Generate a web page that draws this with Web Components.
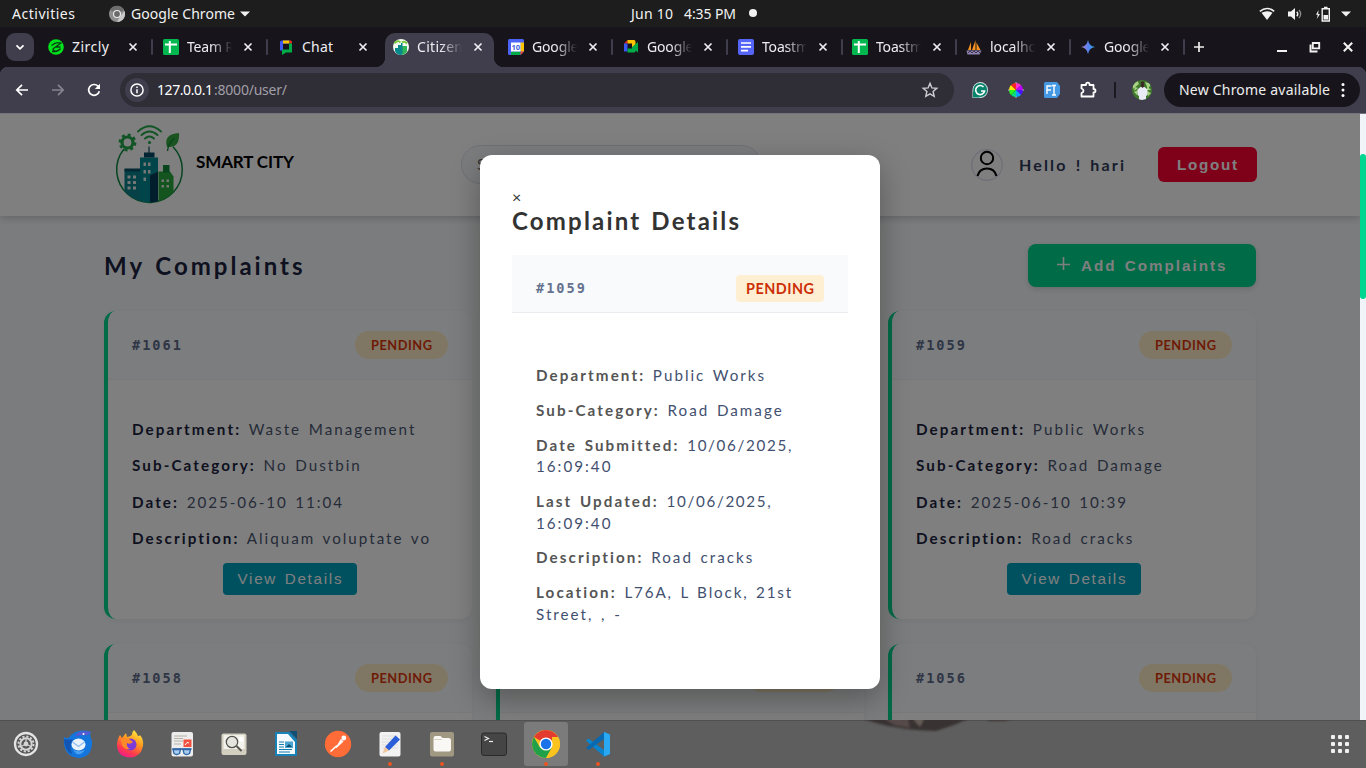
<!DOCTYPE html>
<html lang="en">
<head>
<meta charset="utf-8">
<title>Citizen Dashboard</title>
<style>
html,body{margin:0;height:100%;overflow:hidden;background:#5e5e5e}
body{font-family:"Noto Sans",sans-serif;color:#f2f2f2}
</style>
</head>
<body>
<desktop-shell></desktop-shell>
<script>
const make=(name,css,html,after)=>{
  const t=document.createElement('template');
  t.innerHTML=`<style>*{box-sizing:border-box}${css}</style>${typeof html==='string'?html:''}`;
  customElements.define(name,class extends HTMLElement{
    connectedCallback(){
      if(this.shadowRoot)return;
      const r=this.attachShadow({mode:'open'});
      r.append(t.content.cloneNode(true));
      if(typeof html==='function'){const x=document.createElement('template');x.innerHTML=html(this);r.append(x.content.cloneNode(true));}
      if(after)after(this,r);
    }
  });
};

/* Single line label whose tracking is tuned to a given width */
make('fit-text',`:host{display:inline-block;white-space:nowrap;flex:none}span{display:inline-block}`,
 e=>`<span>${e.getAttribute('t')}</span>`,
 (e,r)=>{
  const s=r.querySelector('span'),w=+e.getAttribute('w'),n=e.getAttribute('t').length-1;
  s.style.letterSpacing='0px';
  const nat=s.getBoundingClientRect().width;
  if(nat&&w)s.style.letterSpacing=((w-nat)/n).toFixed(3)+'px';
  if(w)e.style.width=w+'px';
 });

/* ---------- icons ---------- */
const sheets='<rect x="0" y="0" width="16" height="16" rx="1.5" fill="#00b84f"/><path d="M2 5.4h12M6.800 2v12" stroke="#fff" stroke-width="2"/>';
const meet='<path d="M1 4.500 4.500 1v3.500z" fill="#ea2a20"/><path d="M4.500 1H11q1.500 0 1.500 1.500V8H9V4.500H4.500z" fill="#ffc400"/><path d="M1 4.500h3.500v8H1z" fill="#3b55f0"/><path d="M4.500 9.500H9V8l6-5v10.500l-2.500-2V12q0 1.500-1.500 1.500H4.500z" fill="#00ac47"/>';
const smart=`<defs><clipPath id="k"><circle cx="34.500" cy="47.300" r="32.800"/></clipPath></defs>
<path d="M9 25A32.800 32.800 0 1 0 58 22.800" fill="none" stroke="#0f8a43" stroke-width="1.500"/>
<g transform="translate(0,-1.500)"><g clip-path="url(#k)"><path d="M9.500 47H25V82H9.500z" fill="#0a838d"/><path d="M9.500 46H25v3H9.500z" fill="#075069"/>
<path d="M25 35H43V82H25z" fill="#008a92"/><path d="M29 30h10.500v5H29z" fill="#064a66"/><path d="M34 24v7" stroke="#064a66" stroke-width="1.200"/>
<path d="M35 53 43 49V82H35z" fill="#053c58"/>
<path d="M43.500 49H55l3.500 5V82h-15z" fill="#27a83f"/><path d="M48 42.500h6.500V50H48z" fill="#108a38"/></g>
<g fill="#e6f0ee"><path d="M12.500 53h3v3h-3zm5.500 0h3v3h-3zM12.500 58.500h3v3h-3zm5.500 0h3v3h-3zM12.500 64h3v3h-3zm5.500 0h3v3h-3zM28.500 40h2.500v3.500h-2.500zm4.500 0h2.500v3.500H33zM28.500 47.500h2.500V51h-2.500zm4.500 0h2.500V51H33zM28.500 55h2.500v3.500h-2.500zM46.500 57h2.500v2.500h-2.500zm5 0H54v2.500h-2.500zM46.500 62.500h2.500V65h-2.500zm5 0H54V65h-2.500z"/></g></g>
<g transform="translate(0,-2)"><circle cx="12.500" cy="20.500" r="5.500" fill="none" stroke="#23a94a" stroke-width="3.200"/><circle cx="12.500" cy="20.500" r="7.700" fill="none" stroke="#23a94a" stroke-width="2.500" stroke-dasharray="3.020 3.020"/>
<g fill="none" stroke="#23a94a" stroke-width="1.900" stroke-linecap="round"><path d="M23 9.500Q34.500-1 46 9.500M26.500 13q8-7 16 0M30 16.500q4.500-4 9 0"/></g><circle cx="34.500" cy="20.500" r="1.600" fill="#23a94a"/>
<path d="M52 25Q48 12 64 11Q65 25 54 25z" fill="#35a943"/><path d="M52.500 29Q53 22 59.500 16" fill="none" stroke="#108a38" stroke-width="1.400"/></g>`;
const I={
 zircly:['0 0 16 16','<circle cx="8" cy="8" r="7.800" fill="#00e21b"/><path d="M3.500 6.500Q8 2.500 13 4L5.500 9.500Q4 11.500 7 11.800M12.500 9.500Q10 13 4 12.500M7 8h5.500" fill="none" stroke="#093b12" stroke-width="1.300"/>'],
 sheets:['0 0 16 16',sheets],
 chat:['0 0 16 16','<path d="M2 3Q2 1.500 3.500 1.500H11v3H5v7H2z" fill="#3e5bf6"/><path d="M5 1.500h6.500v3H5z" fill="#ffc600"/><path d="M11.500 1.500h1Q14 1.500 14 4.500h-2.500z" fill="#ef3124"/><path d="M11 4.500h3v9H8L4 16v-5.500h7z" fill="#00ac47"/>'],
 city:['0 0 16 16','<circle cx="8" cy="8" r="8" fill="#f4faef"/><path d="M2 9h3V6h3V4h1.500v3H13v6Q11 16 7 16 3 15 2 12z" fill="#07898b"/><path d="M9.500 7H14v6q-2 2-4.500 3z" fill="#31b65a"/><path d="M1.500 4.500q3-4 6-1M9 3.500q2-2 5 1" stroke="#79c73b" stroke-width="1.800" fill="none"/>'],
 cal:['0 0 16 16','<path d="M0 1.500Q0 0 1.500 0H14.500Q16 0 16 1.500V12.500L12.500 16H1.500Q0 16 0 14.500z" fill="#4a62f5"/><path d="M12.500 3.500H16V12.500H12.500z" fill="#ffc400"/><path d="M3 12.500h9.500V16H3z" fill="#00ac47"/><path d="M12.500 12.500H16L12.500 16z" fill="#ea4335"/><path d="M3 3.500h9.500v9H3z" fill="#fff"/><text x="7.800" y="10.900" font-family="Noto Sans,sans-serif" font-size="7.500" font-weight="700" text-anchor="middle" fill="#3f62e0">10</text>'],
 meet:['0 0 16 16',meet],
 docs:['0 0 16 16','<rect width="16" height="16" rx="2" fill="#5565f7"/><path d="M3 4h10M3 7.800h10M3 11.700h7" stroke="#fff" stroke-width="1.700"/>'],
 pma:['0 0 16 16','<path d="M2 11 5 3v8zM6 11l3.500-10v10zM10.500 11V3.500L14.500 11z" fill="#f6921e"/><path d="M.5 11.500h15l-2 4h-12z" fill="#8d83ad"/><path d="M2 14l2-2 2 2 2-2 2 2 2-2 2 2" stroke="#393156" fill="none"/>'],
 gem:['0 0 16 16','<defs><linearGradient id="g"><stop stop-color="#b07bd0"/><stop offset=".6" stop-color="#4b86f5"/><stop offset="1" stop-color="#35b0e8"/></linearGradient></defs><path d="M8 1Q9 7 15 8 9 9 8 15 7 9 1 8 7 7 8 1z" fill="url(#g)"/>'],
 x:['0 0 10 10','<path d="M1.500 1.500l7 7M8.500 1.500l-7 7" stroke="currentColor" stroke-width="1.700"/>'],
 down:['0 0 10 10','<path d="M1.500 3.300 5 6.800 8.500 3.300" fill="none" stroke="#fff" stroke-width="1.800"/>'],
 tri:['0 0 10 6','<path d="M0 .5h10L5 5.500z" fill="#f2f2f2"/>'],
 plus:['0 0 12 12','<path d="M6 1v10M1 6h10" stroke="currentColor" stroke-width="1.700"/>'],
 add:['0 0 16 16','<path d="M7.500 1v13M1 8.500h13" stroke="currentColor" stroke-width="1.600"/>'],
 back:['0 0 14 14','<path d="M13 7H2M7 1.800 1.800 7 7 12.200" fill="none" stroke="#fff" stroke-width="1.700"/>'],
 fwd:['0 0 14 14','<path d="M1 7h11M7 1.800 12.200 7 7 12.200" fill="none" stroke="#85838f" stroke-width="1.700"/>'],
 reload:['0 0 14 14','<path d="M12.300 8.200A5.400 5.400 0 1 1 11 3.200L12.400 4.700" fill="none" stroke="#fff" stroke-width="1.700"/><path d="M13 .8V6H7.800z" fill="#fff"/>'],
 info:['0 0 14 14','<circle cx="7" cy="7" r="6.100" fill="none" stroke="#fff" stroke-width="1.500"/><path d="M7 6.300v4M7 3.500v1.600" stroke="#fff" stroke-width="1.500"/>'],
 star:['0 0 16 16','<path d="M8 1.300 9.900 5.900l4.900.4-3.700 3.200 1.100 4.800L8 11.800l-4.200 2.500 1.100-4.800L1.200 6.300l4.900-.4z" fill="none" stroke="#cfcdd3" stroke-width="1.400"/>'],
 gram:['0 0 16 16','<path d="M8 0a8 8 0 1 1 0 16H.5V8A8 8 0 0 1 8 0z" fill="#d8e9e4"/><circle cx="8.200" cy="8" r="7" fill="#07826c"/><path d="M1 9v6.500h7z" fill="#07826c"/><path d="M11.500 5A4.500 4.500 0 1 0 12.600 9H9" fill="none" stroke="#fff" stroke-width="1.600"/>'],
 wheel:['0 0 16 16','<path d="M8 8V1A7 7 0 0 1 13 3z" fill="#ff31d0"/><path d="M8 8l5-5a7 7 0 0 1 2 5z" fill="#c000ff"/><path d="M8 8h7a7 7 0 0 1-2 5z" fill="#4c12ff"/><path d="M8 8l5 5a7 7 0 0 1-5 2z" fill="#0aa0ff"/><path d="M8 8v7a7 7 0 0 1-5-2z" fill="#00dd7f"/><path d="M8 8l-5 5a7 7 0 0 1-2-5z" fill="#29f31f"/><path d="M8 8H1a7 7 0 0 1 2-5z" fill="#ffe600"/><path d="M8 8 3 3a7 7 0 0 1 5-2z" fill="#ff2424"/><path d="M8 0v1.500M8 14.500V16M0 8h1.500M14.500 8H16" stroke="#bbb"/>'],
 fi:['0 0 16 16','<path d="M1.500 0H13l3 4v8l-3 4H1.500Q0 16 0 14.500v-13Q0 0 1.500 0z" fill="#4598e4"/><path d="M3 12V4h4.500M3 8h4M8 3.500h4M8 13h4M10 3.500V13" fill="none" stroke="#fff" stroke-width="1.400"/>'],
 ext:['0 0 18 18','<path d="M2.500 4H7q0-2.300 1.800-2.300T10.600 4H14.500V8q2 0 2 1.700t-2 1.800V15.500H2.500V12q2-.5 2-2.200T2.500 7.500z" fill="none" stroke="#fff" stroke-width="1.800" stroke-linejoin="round"/>'],
 avatar:['0 0 20 20','<defs><clipPath id="c"><circle cx="10" cy="10" r="10"/></clipPath></defs><g clip-path="url(#c)"><path d="M0 0h20v20H0z" fill="#3f7a2c"/><path d="M0 3l5-3 2 4-6 5zM13 2l6 2-3 5zM2 12l4-2-1 5zM15 11l4 2-3 3zM3 7l3 1-4 3zM15 6l4 4-4 0z" fill="#a9d284"/><path d="M7 20V16L5.500 15V9.500L8.500 7h4l3 2.500V15L14 16v4z" fill="#e9ebf4"/><path d="M8.800 2.500Q10.500 0 12.200 2.500V6.500L10.500 8 8.800 6.500z" fill="#3b2a26"/></g>'],
 dots:['0 0 4 16','<g fill="#fff"><circle cx="2" cy="2.500" r="1.500"/><circle cx="2" cy="8" r="1.500"/><circle cx="2" cy="13.500" r="1.500"/></g>'],
 chromeg:['0 0 16 16','<circle cx="8" cy="8" r="8" fill="#8f8f8f"/><path d="M8 8 1 4A8 8 0 0 1 15 4z" fill="#6d6d6d"/><path d="M15.500 5A8 8 0 0 1 8 16l3.500-6z" fill="#c9c9c9"/><circle cx="8" cy="8" r="4" fill="#eee"/><circle cx="8" cy="8" r="2.900" fill="#6a6a6a"/>'],
 wifi:['0 0 16 14','<path d="M2.500 5.800Q8 2.500 13.500 5.800L8 13z" fill="#f2f2f2"/><path d="M.8 4.300Q8-1.500 15.200 4.300" fill="none" stroke="#f2f2f2" stroke-width="1.500"/>'],
 vol:['0 0 16 14','<path d="M1 4.500h3L8 1v12L4 9.500H1z" fill="#f2f2f2"/><path d="M9.800 4.700q2 2.300 0 4.600" stroke="#f2f2f2" stroke-width="1.400" fill="none"/><path d="M12 3q3.300 4 0 8" stroke="#8c8c8c" stroke-width="1.300" fill="none"/>'],
 batt:['0 0 16 16','<path d="M3.500 4 1 8.700h1.800L1.800 13 5 8H3.200z" fill="#f2f2f2"/><path d="M7.200 2.700h7.100V15H7.200zM9 1.500h3.500" fill="none" stroke="#f2f2f2" stroke-width="1.400"/><path d="M8.500 9h4.600v4.600H8.500z" fill="#f2f2f2"/>'],
 min:['0 0 12 12','<path d="M1 10h10" stroke="#f2f2f2" stroke-width="2"/>'],
 rest:['0 0 12 12','<path d="M3.800 2h6.400v5.400H3.800zM1.500 3.500v7h7" fill="none" stroke="#f2f2f2" stroke-width="1.900"/>'],
 logo:['0 0 70 82',smart],
 person:['0 0 34 34','<circle cx="17" cy="17" r="15.300" fill="none" stroke="#e0def0" stroke-width="1.300"/><circle cx="17" cy="10" r="6.200" fill="none" stroke="#000" stroke-width="2"/><path d="M7.500 28Q9.500 20.500 17 20.500T26.500 28" fill="none" stroke="#000" stroke-width="2.100"/>'],
 settings:['0 0 28 28','<circle cx="14" cy="14" r="11" fill="#555" stroke="#e4e4e4" stroke-width="2.300"/><circle cx="14" cy="14" r="5.700" fill="none" stroke="#d4d4d4" stroke-width="2"/><circle cx="14" cy="14" r="7.500" fill="none" stroke="#d4d4d4" stroke-width="2" stroke-dasharray="2.200 1.730"/><circle cx="14" cy="14" r="2.400" fill="#d4d4d4"/><path d="M14 14V8.500M14 14l5 2.500M14 14l-5 2.500" stroke="#d4d4d4" stroke-width="1.200"/>'],
 tbird:['0 0 28 28','<path d="M0 7Q2 8.500 4.500 8 8 3 13 1.500 20-.5 27 2 25.500 4 26.500 7 28.500 10 28 15 26.500 27.500 14.500 28 3 27 .5 17-.5 11 0 7z" fill="#1476dd"/><path d="M12 4.500Q16-.5 27 2q-2 3-5 3.500Q17 4 12 6.500z" fill="#5659cf"/><circle cx="19.500" cy="4" r="1" fill="#fff"/><path d="M0 9Q0 20 8 24.500 5 15 9 9 4 10 0 9z" fill="#1156b4"/><ellipse cx="14.500" cy="14.500" rx="7" ry="6" fill="#e9f3fe"/><path d="M8.500 12 14.500 16.500 20.500 12" fill="none" stroke="#8dbbee" stroke-width="1.200"/><path d="M8.500 19q5 4 12 1-2 5-8 4z" fill="#4ba0f2"/>'],
 fox:['0 0 28 28','<defs><linearGradient id="f" x1=".8" y1="0" x2=".3" y2="1"><stop stop-color="#fff044"/><stop offset=".4" stop-color="#ff9a1f"/><stop offset=".75" stop-color="#ff3d4a"/><stop offset="1" stop-color="#f0198b"/></linearGradient></defs><path d="M18 0q3 3 4 6 2 0 2-1 4 5 3 11-2 11-13 11.500Q2 27 1 16 1 9 4 5l2 3 4-5 1 4q5-1 5-3 0-2 2-4z" fill="url(#f)"/><circle cx="14.500" cy="14.500" r="6" fill="#7c3bd6"/><path d="M5 9q4-2 8 0l4 3q-3 3-6 1-1 4 3 6-6 1-8-4z" fill="#ff8a2a"/>'],
 doc:['0 0 28 28','<rect x="3.500" y="2" width="21.500" height="24.500" rx="2" fill="#ededed"/><path d="M6 6h13M6 8.500h9M6 11h9M6 14h7" stroke="#b5b0a5"/><path d="M15.500 9.500h8v7.500h-8z" fill="#f0503f"/><path d="M17 15q2-4 4-2" fill="none" stroke="#fff"/><path d="M4.500 19h19" stroke="#2d5c9c" stroke-width="1.600"/><path d="M5 19.500h7.500l-1 4q-3 2-5.500 0zM15 19.500h7.500l-1 4q-3 2-5.500 0z" fill="#a9cdf0" stroke="#2d66a8" stroke-width="1.300"/>'],
 scan:['0 0 28 28','<rect x="1.500" y="3.500" width="25" height="21.500" rx="2" fill="#d3cfc0"/><rect x="3.500" y="5" width="21" height="14" fill="#f4f2ec"/><circle cx="12" cy="12" r="5.700" fill="#e5e5e0" stroke="#55554f" stroke-width="1.300"/><path d="M16.500 16l5 5" stroke="#55554f" stroke-width="2"/><circle cx="21" cy="9.500" r="2.500" fill="#fff"/>'],
 writer:['0 0 28 28','<path d="M3 2h15l7 8v16H3z" fill="#1682b8"/><path d="M5 4h11l7 8v12H5z" fill="#f4fafd"/><path d="M17 1h8v8z" fill="#124f74"/><path d="M7 12h5M7 14.500h5M7 17h5M7 19.500h13M7 22h11" stroke="#157cae" stroke-width="1.100"/><path d="M13 11.500h8V18h-8z" fill="#4aa4cf"/><path d="M14 17l3-3 3 3z" fill="#0c4d70"/>'],
 postman:['0 0 28 28','<circle cx="14" cy="14" r="13.200" fill="#ff6c37"/><circle cx="19.800" cy="8" r="2.400" fill="#fff"/><path d="M17 9.500 19 11.500 12 18z" fill="#fff" stroke="#fff"/><path d="M13 15.500 6.500 21.500" stroke="#fff" stroke-width="1.600"/>'],
 edit:['0 0 28 28','<rect x="3.500" y="2" width="21" height="24.500" rx="2" fill="#f2f2f2"/><path d="M6 6h16M6 9h16M6 12h16M6 15h16M6 18h16" stroke="#ddd"/><path d="M19.500 5.500 24 9.500 13 20.500 9 17z" fill="#2b5fd9"/><path d="M9 17 13 20.500 6.500 23.500z" fill="#f0c59a"/>'],
 files:['0 0 28 28','<rect x="2" y="2" width="24" height="24.500" rx="2" fill="#a19882"/><path d="M5.500 9Q5.500 6 7.500 6h5l2 2h6Q23 8 23 10v9.500q0 2-2 2H7.500q-2 0-2-2z" fill="#faf8f4"/><path d="M6 9.500h8" stroke="#d9d4c6"/>'],
 term:['0 0 28 28','<rect x="1.500" y="3" width="25" height="22.500" rx="2.500" fill="#454545" stroke="#2a2a2a"/><path d="M4.500 6.500l4 2-4 2" fill="none" stroke="#eee" stroke-width="1.200"/><path d="M9 11.500h4" stroke="#eee" stroke-width="1.200"/>'],
 chrome:['0 0 28 28','<circle cx="14" cy="14" r="14" fill="#fcc31e"/><path d="M14 14 1.900 7A14 14 0 0 1 26.100 7z" fill="#e33b2e"/><path d="M1.900 7A14 14 0 0 0 14 28l6-10.500L8 17.500z" fill="#21a04a"/><path d="M26.100 7A14 14 0 0 1 14 28l6-10.500V7z" fill="#fcc31e"/><circle cx="14" cy="14" r="6.600" fill="#fff"/><circle cx="14" cy="14" r="5.200" fill="#1a73e8"/>'],
 code:['0 0 28 28','<path d="M20 2l6 2.500V24L20 26.500 3.500 12 2 10.500 4.500 8.500 20 20z" fill="#0a84ce"/><path d="M20 2v7L4.500 20 2 18z" fill="#0969b0"/><path d="M20 2l6 2.500V24L20 26.500z" fill="#29a8f3"/>'],
 apps:['0 0 18 18','<g fill="#f0f0f0">'+[0,7,14].map(y=>[0,7,14].map(x=>`<rect x="${x}" y="${y}" width="4" height="4" rx="1"/>`).join('')).join('')+'</g>']
};
make('ui-icon',`:host{display:block;flex:none;line-height:0}svg{display:block;overflow:visible}`,
 e=>{const [vb,c]=I[e.getAttribute('n')],w=e.getAttribute('w')||16,h=e.getAttribute('h')||w;return `<svg viewBox="${vb}" width="${w}" height="${h}" aria-hidden="true">${c}</svg>`});

/* ---------- desktop ---------- */
make('top-panel',`:host{display:grid;grid-template-columns:631px 1fr 107px;height:27px;background:#1d1d1d;font-size:14px;line-height:27px;align-items:center}
div{display:flex;align-items:center;height:27px}
.a{padding-left:12px}.a ui-icon{margin-left:34px}.a fit-text:nth-of-type(2){margin:0 5px 0 6px}.a .tri{margin-left:0}
.dot{width:8px;height:8px;border-radius:50%;background:#f2f2f2;margin-left:13px}
.c{margin-top:-1px}`,
`<div class="a"><fit-text t="Activities" w="63"></fit-text><ui-icon n="chromeg" w="16"></ui-icon><fit-text t="Google Chrome" w="104"></fit-text><ui-icon class="tri" n="tri" w="10" h="6"></ui-icon></div>
<div class="c"><fit-text t="Jun 10" w="42"></fit-text><fit-text t="4:35 PM" w="52" style="margin-left:11px"></fit-text><span class="dot"></span></div>
<div class="r"><ui-icon n="wifi" w="16" h="14"></ui-icon><ui-icon n="vol" w="16" h="14" style="margin-left:12px"></ui-icon><ui-icon n="batt" w="16" style="margin-left:12px"></ui-icon><ui-icon n="tri" w="10" h="6" style="margin-left:10px"></ui-icon></div>`);

make('browser-tab',`:host{display:block;width:115px;height:40px;flex:none;position:relative;color:#eeedf2}
:host([s]){width:114px}
:host([on])::before{content:"";position:absolute;left:3px;top:6px;width:109px;height:34px;background:#403e4c;border-radius:10px 10px 0 0}
:host([on])::after{content:"";position:absolute;left:-7px;right:-7px;bottom:0;height:10px;background:radial-gradient(circle at 0 0,#0000 10px,#403e4c 10.500px) 0 0/10px 10px no-repeat,radial-gradient(circle at 100% 0,#0000 10px,#403e4c 10.500px) 100% 0/10px 10px no-repeat}
.row{position:relative;display:flex;align-items:center;height:40px;padding-left:11px;z-index:1}
.t{margin-left:8px;width:47px;flex:none;font-size:14px;line-height:22px;height:22px;white-space:nowrap}
:host([long]) .t{-webkit-mask:linear-gradient(90deg,#000 50%,transparent 96%);mask:linear-gradient(90deg,#000 50%,transparent 96%)}
.x{margin-left:9px}.sep{width:2px;height:16px;flex:none;background:#403e4c;margin-left:13px;border-radius:1px}
:host([nosep]) .sep{visibility:hidden}`,
 e=>`<div class="row"><ui-icon n="${e.getAttribute('i')}"></ui-icon><div class="t"><fit-text t="${e.getAttribute('t')}" w="${e.getAttribute('w')}"></fit-text></div><ui-icon class="x" n="x" w="10"></ui-icon><span class="sep"></span></div>`);

make('tab-strip',`:host{display:flex;height:40px;background:#17151b;align-items:center;position:relative}
.m{width:28px;height:28px;border-radius:9px;background:#403e4c;margin:0 3px 0 6px;display:grid;place-items:center;flex:none}
.p{margin-left:10px;color:#eee}.win{display:flex;gap:21px;margin-left:auto;margin-right:12px;color:#f2f2f2}`,
`<span class="m"><ui-icon n="down" w="10"></ui-icon></span>
<browser-tab i="zircly" t="Zircly" w="37"></browser-tab><browser-tab long i="sheets" t="Team R" w="47"></browser-tab><browser-tab nosep i="chat" t="Chat" w="31"></browser-tab><browser-tab on long nosep i="city" t="Citizen" w="46"></browser-tab><browser-tab long i="cal" t="Google" w="46.500"></browser-tab><browser-tab long i="meet" t="Google" w="46.500"></browser-tab><browser-tab s long i="docs" t="Toastm" w="47"></browser-tab><browser-tab s long i="sheets" t="Toastm" w="47"></browser-tab><browser-tab s long i="pma" t="localho" w="47"></browser-tab><browser-tab s long i="gem" t="Google" w="46.500"></browser-tab>
<ui-icon class="p" n="plus" w="12"></ui-icon><div class="win"><ui-icon n="min" w="12"></ui-icon><ui-icon n="rest" w="12"></ui-icon><ui-icon n="x" w="12"></ui-icon></div>`);

make('tool-bar',`:host{display:flex;height:47px;background:#403e4c;align-items:center;border-bottom:1px solid #74727c;position:relative;font-size:14px}
:host::before{content:"";position:absolute;inset:0 0 auto;height:8px;background:radial-gradient(circle at 8px 8px,#0000 8px,#17151b 8.500px) 0 0/8px 8px no-repeat,radial-gradient(circle at 0 8px,#0000 8px,#17151b 8.500px) 100% 0/8px 8px no-repeat}
.nav{display:flex;gap:22px;padding-left:15px;width:120px}
.omni{display:flex;align-items:center;width:834px;height:34px;border-radius:17px;background:#2f2d36;padding:0 16px 0 5px}
.omni fit-text{margin-top:-1px}
.i{width:24px;height:24px;border-radius:50%;background:#403e4c;display:grid;place-items:center;margin-right:8px}
.d{color:#a19fa7;margin-left:1px}.omni .s{margin-left:auto}
.ex{display:flex;align-items:center;margin-left:18px;gap:20px}
.bar{width:2px;height:16px;background:#1b1920}
.new{display:flex;align-items:center;justify-content:space-between;width:196px;height:34px;border-radius:17px;background:#17151b;padding:0 15px;margin-left:12px;color:#eee}.new fit-text{margin-top:-1px}`,
`<div class="nav"><ui-icon n="back" w="14"></ui-icon><ui-icon n="fwd" w="14"></ui-icon><ui-icon n="reload" w="14"></ui-icon></div>
<div class="omni"><span class="i"><ui-icon n="info" w="14"></ui-icon></span><fit-text t="127.0.0.1" w="56" style="color:#fff"></fit-text><fit-text class="d" t=":8000/user/" w="73"></fit-text><ui-icon class="s" n="star" w="16"></ui-icon></div>
<div class="ex"><ui-icon n="gram"></ui-icon><ui-icon n="wheel"></ui-icon><ui-icon n="fi"></ui-icon><ui-icon n="ext" w="18" style="margin:0 1px 0 -1px"></ui-icon></div>
<span class="bar" style="margin-left:16px"></span><ui-icon n="avatar" w="20" style="margin-left:16px"></ui-icon>
<div class="new"><fit-text t="New Chrome available" w="151"></fit-text><ui-icon n="dots" w="4" h="16"></ui-icon></div>`);

/* ---------- page ---------- */
make('site-header',`:host{display:flex;height:102px;background:#fff;box-shadow:0 2px 8px rgba(0,0,0,.2);padding:0 103px 1px 115px;align-items:center;position:relative;flex:none;word-spacing:2px}
.name{color:#000;font:700 17px/26px Lato,sans-serif;margin:-5px 0 0 11px;word-spacing:0}
.search{width:300px;height:39px;border:1px solid #dfe1ee;border-radius:20px;background:#f7f9fc;margin-left:167px;padding-left:15px;font:15.200px/37px Lato,sans-serif;color:#666;letter-spacing:2px}
.u{margin-left:209px}.hi{margin:1px 0 0 15px;font:700 16px/24px Lato,sans-serif;color:#2f3b59}
.out{margin-left:auto;width:99px;height:35px;border-radius:6px;background:#ff0033;color:#fff;font:700 15.200px/35px "Liberation Sans",sans-serif;padding-left:19px}`,
`<ui-icon n="logo" w="70" h="82"></ui-icon><div class="name"><fit-text t="SMART CITY" w="98"></fit-text></div><div class="search">Search</div><ui-icon class="u" n="person" w="34"></ui-icon><div class="hi"><fit-text t="Hello ! hari" w="105"></fit-text></div><div class="out"><fit-text t="Logout" w="60"></fit-text></div>`);

make('status-badge',`:host{display:grid;place-items:center;width:93px;height:28px;border-radius:14px;background:#ffefc8;color:#de350b;font:700 12.800px/20px Lato,sans-serif}
:host([square]){width:88px;height:27px;border-radius:4px;background:#ffefd2;color:#cc2e06;font-size:14.400px;padding-top:2px}`,
 e=>`<fit-text t="PENDING" w="${e.hasAttribute('square')?68:61}"></fit-text>`);

make('complaint-card',`:host{display:block;height:308px;background:#fff;border-left:4px solid #00d68f;border-radius:12px;overflow:hidden;box-shadow:0 2px 8px rgba(0,0,0,.05)}
header{height:69px;background:#f8fafc;border-bottom:1px solid #f0f3f7;padding:0 24px;display:flex;align-items:center;justify-content:space-between}
.id{font:700 13.600px/20px "DejaVu Sans Mono",monospace;letter-spacing:2px;color:#5e6c8c}
section{padding:38px 0 0 24px;font:15.200px/22.400px Lato,sans-serif;letter-spacing:2px;word-spacing:1.800px;color:#4b5772}
p{margin:0 0 14px;white-space:nowrap}b{color:#1c2340;letter-spacing:2.100px}.n{letter-spacing:1.920px}
.v{width:134px;height:32px;border-radius:4px;background:#00a3bf;color:#fff;font:15.200px/32px "Liberation Sans",sans-serif;padding-left:14.500px;margin:-.500px 0 0 91px}`,
 e=>{const a=k=>e.getAttribute(k)||'';return `<header>${a('no')?`<span class="id">#${a('no')}</span>`:'<span></span>'}<status-badge></status-badge></header>`+(a('dep')?`<section><p><b>Department:</b> ${a('dep')}</p><p><b>Sub-Category:</b> ${a('sub')}</p><p><b>Date:</b> <span class="n">${a('date')}</span></p><p><b>Description:</b> ${a('desc')}</p><div class="v"><fit-text t="View Details" w="104"></fit-text></div></section>`:'')});

make('complaint-list',`:host{display:block;padding:28px 104px 0;word-spacing:2px}
.top{display:flex;justify-content:space-between;height:43px;align-items:center}
h2{margin:0;font:700 24px/43px Lato,sans-serif;color:#1c2340}
.add{display:flex;align-items:center;width:228px;height:43px;border-radius:8px;background:#00d68f;color:#fff;font:700 15.200px/43px "Liberation Sans",sans-serif;box-shadow:0 2px 6px rgba(0,0,0,.14);padding-left:28px}
.add ui-icon{margin:-4px 9px 0 0}
.grid{display:grid;grid-template-columns:repeat(3,368px);gap:24.500px 24px;margin-top:24px}`,
`<div class="top"><h2><fit-text t="My Complaints" w="198.500"></fit-text></h2><div class="add"><ui-icon n="add" w="16"></ui-icon><fit-text t="Add Complaints" w="144.500"></fit-text></div></div>
<div class="grid">
<complaint-card no="1061" dep="Waste Management" sub="No Dustbin" date="2025-06-10 11:04" desc="Aliquam voluptate vo"></complaint-card>
<complaint-card></complaint-card>
<complaint-card no="1059" dep="Public Works" sub="Road Damage" date="2025-06-10 10:39" desc="Road cracks"></complaint-card>
<complaint-card no="1058"></complaint-card><complaint-card></complaint-card><complaint-card no="1056"></complaint-card></div>`);

make('detail-modal',`:host{display:block;width:400px;height:534px;border-radius:12px;background:#fff;padding:32px;box-shadow:0 10px 30px rgba(0,0,0,.3);font-family:Lato,sans-serif;color:#333;word-spacing:2px}
.x{font-size:16px;line-height:20px;height:20px}
h2{margin:1px 0 21px;font:700 24px/26px Lato,sans-serif;color:#333}
header{height:58px;background:#f8fafc;border-bottom:1px solid #e8eaed;padding:9px 24px 0;display:flex;align-items:center;justify-content:space-between}
.id{font:700 13.600px/20px "DejaVu Sans Mono",monospace;letter-spacing:2px;color:#66728f;margin-top:-1px}
section{padding:52px 0 0 24px;font-size:15.200px;line-height:21.600px;letter-spacing:2px;word-spacing:1.800px;color:#42506f;white-space:nowrap}
p{margin:0 0 13.200px}b{color:#555;letter-spacing:2.100px}.n{letter-spacing:1.650px}.l{letter-spacing:1.850px}`,
`<div class="x">×</div><h2><fit-text t="Complaint Details" w="227"></fit-text></h2>
<header><span class="id">#1059</span><status-badge square></status-badge></header>
<section><p><b>Department:</b> Public Works</p><p><b>Sub-Category:</b> Road Damage</p><p><b>Date Submitted:</b> <span class="n">10/06/2025,</span><br>16:09:40</p><p><b>Last Updated:</b> <span class="n">10/06/2025,</span><br>16:09:40</p><p><b>Description:</b> Road cracks</p><p><b>Location:</b> <span class="l">L76A, L Block, 21st</span><br>Street, , -</p></section>`);

make('web-page',`:host{display:grid;grid-template-columns:1360px 6px;height:606px;overflow:hidden}
.view{position:relative;height:606px;overflow:hidden;background:#f7f9fb}
.back{position:absolute;inset:0;background:rgba(0,0,0,.5);display:flex;justify-content:center;align-items:flex-start;padding-top:41px}
.track{background:#f0f4f8;padding-top:40px}.thumb{height:145px;border-radius:3px;background:#00d68f}`,
`<div class="view"><site-header></site-header><complaint-list></complaint-list><div class="back"><detail-modal></detail-modal></div></div><div class="track"><div class="thumb"></div></div>`);

make('dock-item',`:host{width:52px;height:48px;display:grid;place-items:center;position:relative}
.b{width:44px;height:44px;display:grid;place-items:center;border-radius:3px}
:host([on]) .b{background:#7b7b7b}
:host([run])::after{content:"";position:absolute;width:4px;height:4px;border-radius:50%;background:#e95420;left:24px;bottom:2px}`,
 e=>`<div class="b"><ui-icon n="${e.getAttribute('i')}" w="28"></ui-icon></div>`);
make('app-dock',`:host{display:flex;align-items:center;height:48px;background:#5e5e5e;position:relative;overflow:hidden;box-shadow:inset 0 1px #505050}
.apps{margin-left:auto;margin-right:17px}
.wall{position:absolute;left:850px;top:0}`,
`<svg class="wall" width="180" height="18"><defs><filter id="b" x="-10%" y="-50%" width="120%" height="200%"><feGaussianBlur stdDeviation="1.300"/></filter></defs><g filter="url(#b)"><path d="M8-3H122L104 5 86 11Q50 10 26 3z" fill="#383230"/><path d="M34-2H58L60 8 44 5z" fill="#55484a"/><path d="M63-1h11l-4 8z" fill="#655c56"/><path d="M135-3h32l-12 4h-16z" fill="#403936"/></g></svg>`
+['settings','tbird','fox','doc','scan','writer','postman','edit run','files run','term','chrome run on','code run'].map(s=>{const [i,...f]=s.split(' ');return `<dock-item i="${i}" ${f.join(' ')}></dock-item>`}).join('')+`<ui-icon class="apps" n="apps" w="18"></ui-icon>`);

make('desktop-shell',`:host{display:grid;grid-template-rows:27px 40px 47px 606px 48px;width:1366px;height:768px}`,
`<top-panel></top-panel><tab-strip></tab-strip><tool-bar></tool-bar><web-page></web-page><app-dock></app-dock>`);
</script>
</body>
</html>
